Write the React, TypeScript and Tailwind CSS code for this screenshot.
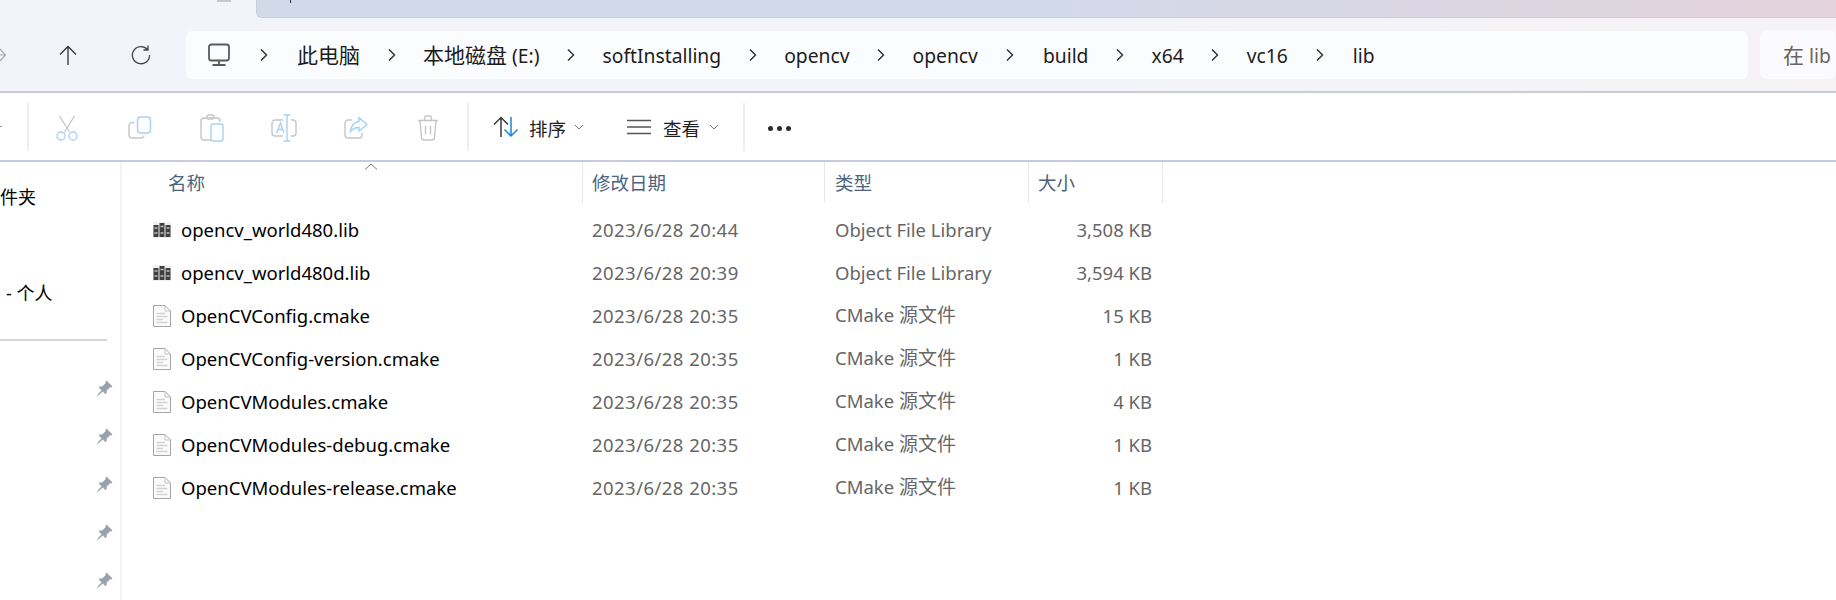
import React, { FC, ReactNode } from 'react';

const FONT = "font-['Noto_Sans','Noto_Sans_CJK_SC',sans-serif]";

const Cjk: FC<{ children: ReactNode }> = ({ children }) => <span className="text-[21px]">{children}</span>;

const crumbs: ReactNode[] = [
  <Cjk>此电脑</Cjk>,
  <>
    <Cjk>本地磁盘</Cjk> (E:)
  </>,
  'softInstalling',
  'opencv',
  'opencv',
  'build',
  'x64',
  'vc16',
  'lib',
];

const files = [
  { name: 'opencv_world480.lib', date: '2023/6/28 20:44', size: '3,508 KB', lib: true },
  { name: 'opencv_world480d.lib', date: '2023/6/28 20:39', size: '3,594 KB', lib: true },
  { name: 'OpenCVConfig.cmake', date: '2023/6/28 20:35', size: '15 KB', lib: false },
  { name: 'OpenCVConfig-version.cmake', date: '2023/6/28 20:35', size: '1 KB', lib: false },
  { name: 'OpenCVModules.cmake', date: '2023/6/28 20:35', size: '4 KB', lib: false },
  { name: 'OpenCVModules-debug.cmake', date: '2023/6/28 20:35', size: '1 KB', lib: false },
  { name: 'OpenCVModules-release.cmake', date: '2023/6/28 20:35', size: '1 KB', lib: false },
];

const Chevron: FC = () => (
  <svg width="10" height="14" viewBox="0 0 10 14" fill="none" stroke="#2b2b2b" strokeWidth="1.4">
    <path d="M2 1.5 L7.5 7 L2 12.5" />
  </svg>
);

const SmallChevron: FC = () => (
  <svg width="10" height="6" viewBox="0 0 10 6" fill="none" stroke="#7a7a7a" strokeWidth="1">
    <path d="M1 1 L5 5 L9 1" />
  </svg>
);

const Monitor: FC = () => (
  <svg width="24" height="24" viewBox="0 0 24 24" fill="none" stroke="#5a5a5a" strokeWidth="1.8">
    <rect x="2" y="1.5" width="20" height="16" rx="2.5" />
    <path d="M12 18v3.5M5.5 22h13" />
  </svg>
);

const CutIcon: FC = () => (
  <svg width="22" height="26" viewBox="0 0 22 26" fill="none" strokeWidth="1.3">
    <path d="M3.5 1 L13.5 17M18.5 1 L8.5 17" stroke="#c6c6c6" />
    <circle cx="5" cy="21" r="4" stroke="#a6d1f5" />
    <circle cx="17" cy="21" r="4" stroke="#a6d1f5" />
  </svg>
);

const CopyIcon: FC = () => (
  <svg width="24" height="24" viewBox="0 0 24 24" fill="none" strokeWidth="1.4">
    <path d="M6 6.5 H4 a3 3 0 0 0 -3 3 V19 a3 3 0 0 0 3 3 H13 a3 3 0 0 0 3 -2.5" stroke="#c6c6c6" />
    <rect x="9.5" y="1" width="13" height="16" rx="3" stroke="#a6d1f5" />
  </svg>
);

const PasteIcon: FC = () => (
  <svg width="24" height="28" viewBox="0 0 24 28" fill="none" strokeWidth="1.4">
    <path d="M11 26 H4 a3 3 0 0 1 -3 -3 V7 a3 3 0 0 1 3 -3 H17 a3 3 0 0 1 3 3 V8" stroke="#c6c6c6" />
    <rect x="7" y="1" width="7" height="4" rx="1.5" stroke="#c6c6c6" />
    <rect x="11" y="10" width="12" height="17" rx="2" stroke="#a6d1f5" />
  </svg>
);

const RenameIcon: FC = () => (
  <svg width="26" height="28" viewBox="0 0 26 28" fill="none" strokeWidth="1.4">
    <path d="M12 6 H4 a3 3 0 0 0 -3 3 V19 a3 3 0 0 0 3 3 H12M20 6 H22 a3 3 0 0 1 3 3 V19 a3 3 0 0 1 -3 3 H20" stroke="#c6c6c6" />
    <path d="M5.5 19 L9.5 9 L13 19M7 15.5 H12" stroke="#a6d1f5" />
    <path d="M16 1 V27M12.5 1 H19.5M12.5 27 H19.5" stroke="#a6d1f5" />
  </svg>
);

const ShareIcon: FC = () => (
  <svg width="24" height="24" viewBox="0 0 24 24" fill="none" strokeWidth="1.4">
    <path d="M8 4 H4 a3 3 0 0 0 -3 3 V19 a3 3 0 0 0 3 3 H15 a3 3 0 0 0 3 -3 V17" stroke="#c6c6c6" />
    <path d="M15 1.5 L23 8.5 L15 15 V11.5 C11 11.5 8 13 6 16.5 C6.5 10.5 10 6 15 5.5 Z" stroke="#a6d1f5" />
  </svg>
);

const TrashIcon: FC = () => (
  <svg width="22" height="26" viewBox="0 0 22 26" fill="none" stroke="#c6c6c6" strokeWidth="1.4">
    <path d="M1 5.5 H21M7.5 5 V3 a2 2 0 0 1 2 -2 H12.5 a2 2 0 0 1 2 2 V5M3 6 L4.5 22.5 a2.5 2.5 0 0 0 2.5 2.5 H15 a2.5 2.5 0 0 0 2.5 -2.5 L19 6M8.5 11 V19.5M13.5 11 V19.5" />
  </svg>
);

const SortIcon: FC = () => (
  <svg width="26" height="22" viewBox="0 0 26 22" fill="none" strokeWidth="1.5">
    <path d="M8 21 V2M1 8.5 L8 1.5 L15 8.5" stroke="#3a3a3a" />
    <path d="M18 1 V20M11.5 13.5 L18 20 L24.5 13.5" stroke="#1a86d8" />
  </svg>
);

const LibIcon: FC = () => (
  <svg width="18" height="16" viewBox="0 0 18 16" className="shrink-0">
    <rect width="18" height="16" fill="#f0f0f0" />
    <rect x="0.5" y="3" width="5" height="12" fill="#3f3f3f" />
    <rect x="6.5" y="1" width="5" height="14" fill="#3f3f3f" />
    <rect x="12.5" y="3" width="5" height="12" fill="#3f3f3f" />
    <path d="M1.5 6h3M1.5 11h3M7.5 4.5h3M7.5 11h3M13.5 6h3M13.5 11h3" stroke="#bdbdbd" strokeWidth="1.5" />
  </svg>
);

const DocIcon: FC = () => (
  <svg width="18" height="22" viewBox="0 0 18 22" className="shrink-0" fill="none">
    <path d="M0.5 0.5 H12 L17.5 6 V21.5 H0.5 Z" fill="#fbfbfb" stroke="#a5a5a5" />
    <path d="M12 0.5 V6 H17.5" stroke="#c4c4c4" />
    <path d="M3.5 8.5 H12M3.5 11.5 H14.5M3.5 14.5 H10M3.5 17.5 H14.5" stroke="#d2d2d2" strokeWidth="1.3" />
  </svg>
);

const Pin: FC = () => (
  <svg width="16" height="16" viewBox="0 0 16 16" fill="#9aa3aa">
    <path d="M9.5 0.5 L15.5 6.5 L14.3 7.6 L13 7.3 L9.8 10.5 L9.6 13.2 L8.6 14.2 L1.8 7.4 L2.8 6.4 L5.5 6.2 L8.7 3 L8.4 1.7 Z" />
    <path d="M4.6 9.9 L6.1 11.4 L0.6 15.9 L0.1 15.4 Z" />
  </svg>
);

const App: FC = () => {
  return (
    <div className={`${FONT} flex h-[600px] w-[1836px] flex-col overflow-hidden bg-white text-black`}>
      {/* tab strip */}
      <div className="relative flex h-[18px] shrink-0 bg-[#f3f4f9]">
        <div className="h-[18px] w-[256px] shrink-0" />
        <div className="flex-1 rounded-bl-[6px] border-b border-l border-[#c8cde0] bg-gradient-to-r from-[#d2daea] from-50% to-[#e4d3dc]" />
        <span className="absolute left-[217px] top-0 h-[2px] w-[14px] bg-[#c8c8c8]" />
        <span className="absolute left-[290px] top-0 h-[3px] w-[1px] bg-[#333333]" />
      </div>

      {/* address row */}
      <div className="flex h-[73px] shrink-0 items-center bg-gradient-to-r from-[#f3f4f9] from-60% to-[#f6f2f5]">
        <div className="flex w-[32px] justify-start">
          <svg width="6" height="14" viewBox="0 0 6 14" fill="none" stroke="#a8a8a8" strokeWidth="1.2">
            <path d="M-2 7 H5M0 1 L5.5 7 L0 13" />
          </svg>
        </div>
        <div className="flex w-[72px] justify-center">
          <svg width="18" height="20" viewBox="0 0 18 20" fill="none" stroke="#333333" strokeWidth="1.3">
            <path d="M9 20 V1.5M1 9.5 L9 1.5 L17 9.5" />
          </svg>
        </div>
        <div className="flex w-[74px] justify-center">
          <svg width="20" height="20" viewBox="0 0 20 20" fill="none" stroke="#444444" strokeWidth="1.3">
            <path d="M16.5 4.5 A8.6 8.6 0 1 0 18.6 10M17 0.5 V5 H12.5" />
          </svg>
        </div>
        <div className="w-[8px]" />
        <div className="flex h-[48px] w-[1562px] items-center rounded-[6px] bg-[#fbfcfe] pl-[21px] text-[19.3px] text-[#1c1c1c]">
          <Monitor />
          <div className="flex w-[66px] justify-center">
            <Chevron />
          </div>
          {crumbs.map((c, i) => (
            <React.Fragment key={i}>
              <span className="whitespace-nowrap pt-[3px]">{c}</span>
              {i < crumbs.length - 1 && (
                <div className={`flex ${i === 4 || i === 7 ? 'w-[65px]' : 'w-[63px]'} justify-center`}>
                  <Chevron />
                </div>
              )}
            </React.Fragment>
          ))}
        </div>
        <div className="ml-[12px] flex h-[49px] flex-1 items-center rounded-[6px] bg-[#fbfafc] pl-[23px] pt-[3px] text-[19.3px] text-[#666666]">
          <span className="text-[21px]">在</span>&nbsp;lib
        </div>
      </div>

      {/* toolbar */}
      <div className="flex h-[71px] shrink-0 items-center border-y-2 border-[#c6cbdf] bg-white">
        <div className="flex h-[48px] w-[29px] items-center border-r-2 border-[#eeeeee]">
          <span className="h-[1px] w-[2px] bg-[#999999]" />
        </div>
        {[CutIcon, CopyIcon, PasteIcon, RenameIcon, ShareIcon, TrashIcon].map((Icon, i) => (
          <div key={i} className={`flex h-[48px] ${i === 0 ? 'w-[75px]' : 'w-[72px]'} items-center justify-center pt-[2px]`}>
            <Icon />
          </div>
        ))}
        <div className="ml-[3px] h-[48px] w-[2px] bg-[#eeeeee]" />
        <div className="ml-[24px] flex items-center text-[18.5px] text-[#1f1f1f]">
          <SortIcon />
          <span className="ml-[10px] pt-[4px]">排序</span>
          <span className="ml-[8px] flex">
            <SmallChevron />
          </span>
        </div>
        <div className="ml-[43px] flex items-center text-[18.5px] text-[#1f1f1f]">
          <svg width="24" height="16" viewBox="0 0 24 16" stroke="#555555" strokeWidth="1.4">
            <path d="M0 1.5 H24M0 8 H24M0 14.5 H24" />
          </svg>
          <span className="ml-[12px] pt-[4px]">查看</span>
          <span className="ml-[9px] flex">
            <SmallChevron />
          </span>
        </div>
        <div className="ml-[24px] h-[48px] w-[2px] bg-[#eeeeee]" />
        <div className="ml-[23px] mt-[3px] flex gap-[4px]">
          <span className="size-[5px] rounded-full bg-[#2b2b2b]" />
          <span className="size-[5px] rounded-full bg-[#2b2b2b]" />
          <span className="size-[5px] rounded-full bg-[#2b2b2b]" />
        </div>
      </div>

      <div className="flex min-h-0 flex-1">
        {/* sidebar */}
        <div className="flex w-[122px] shrink-0 flex-col overflow-hidden border-r-2 border-[#f3f3f3] pt-[11px] text-[18px]">
          <div className="flex h-[48px] shrink-0 items-center">件夹</div>
          <div className="h-[48px] shrink-0" />
          <div className="flex h-[48px] shrink-0 items-center pl-[6px]">- 个人</div>
          <div className="mt-[22px] mb-[23px] h-[2px] w-[107px] shrink-0 bg-[#d6d6d6]" />
          {[0, 1, 2, 3, 4].map((i) => (
            <div key={i} className="flex h-[48px] shrink-0 items-center pl-[97px]">
              <Pin />
            </div>
          ))}
        </div>

        {/* file list */}
        <div className="relative flex-1 text-[18.5px]">
          <svg width="14" height="7" viewBox="0 0 14 7" fill="none" stroke="#777777" strokeWidth="1" className="absolute left-[242px] top-[1px]">
            <path d="M1 6.5 L7 1 L13 6.5" />
          </svg>
          <div className="grid h-[41px] grid-cols-[461px_242px_204px_134px] text-[18.5px] text-[#4d627c]">
            <div className="flex items-center border-r border-[#e8e8e8] pl-[46px] pt-[1px]">名称</div>
            <div className="flex items-center border-r border-[#e8e8e8] pl-[9px] pt-[1px]">修改日期</div>
            <div className="flex items-center border-r border-[#e8e8e8] pl-[10px] pt-[1px]">类型</div>
            <div className="flex items-center border-r border-[#e8e8e8] pl-[9px] pt-[1px]">大小</div>
          </div>
          <div className="pt-[5px]">
            {files.map((f) => (
              <div key={f.name} className="grid h-[43px] grid-cols-[461px_242px_204px_134px] items-center text-[#666666]">
                <div className="flex items-center gap-[10px] pl-[31px] text-black">
                  {f.lib ? <LibIcon /> : <DocIcon />}
                  <span>{f.name}</span>
                </div>
                <div className="pl-[9px] tracking-[0.45px]">{f.date}</div>
                <div className="pl-[10px]">
                  {f.lib ? (
                    'Object File Library'
                  ) : (
                    <>
                      CMake <span className="text-[19px]">源文件</span>
                    </>
                  )}
                </div>
                <div className="pr-[11px] text-right">{f.size}</div>
              </div>
            ))}
          </div>
        </div>
      </div>
    </div>
  );
};

export default App;
